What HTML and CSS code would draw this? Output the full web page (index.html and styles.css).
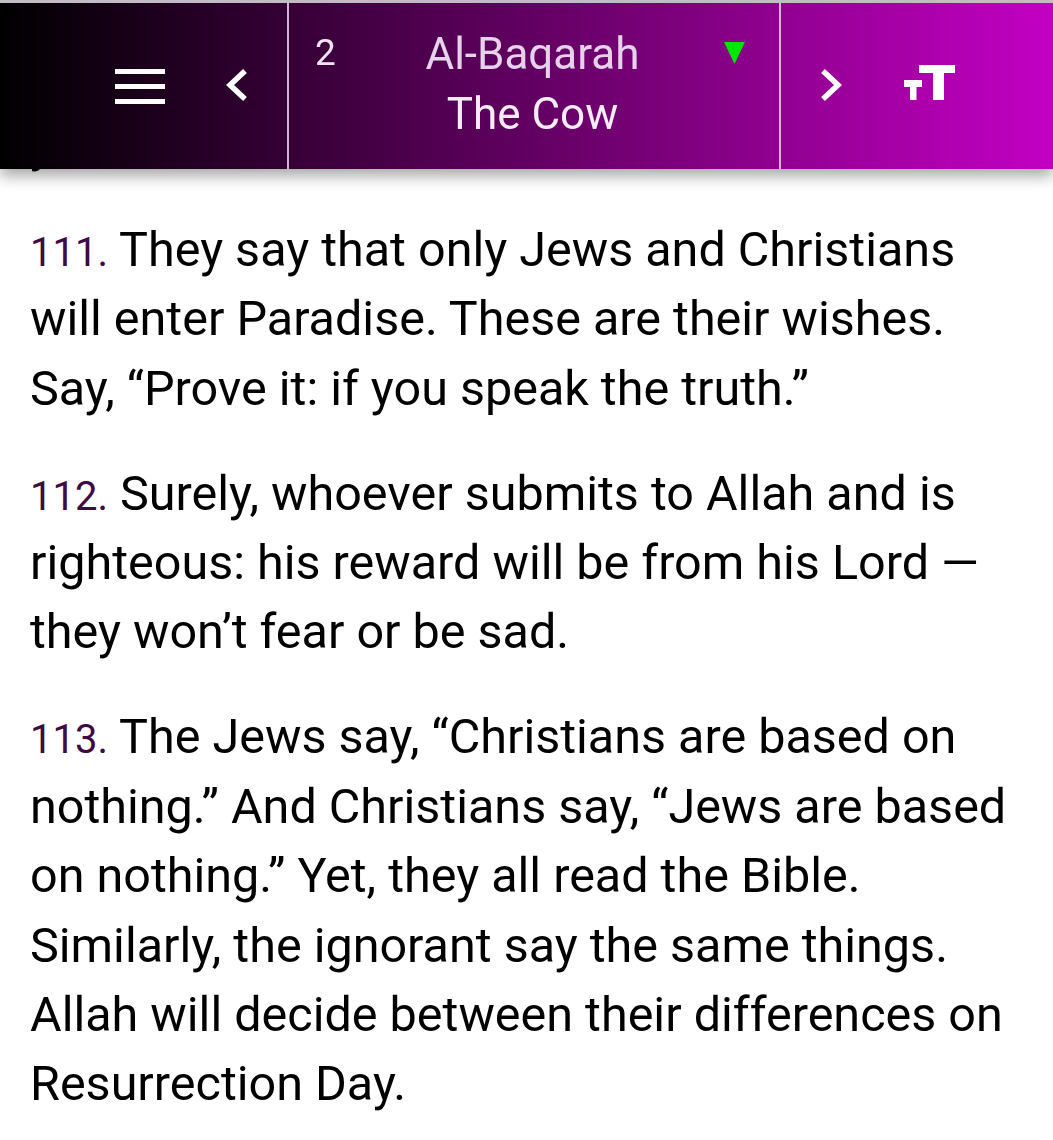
FILE: index.html
```html
<!DOCTYPE html>
<html lang="en">
<head>
    <meta charset="UTF-8">
    <meta name="viewport" content="width=device-width, initial-scale=1.0">
    <title>Al-Baqarah - The Cow</title>
    <link rel="stylesheet" href="styles.css">
</head>
<body>

<div id="top-bar">
    <div class="nav-left">
        <svg class="menu-icon" width="50" height="36" viewBox="0 0 50 36">
            <rect x="0" y="1" width="50" height="5" fill="#fff"/>
            <rect x="0" y="16" width="50" height="5" fill="#fff"/>
            <rect x="0" y="31" width="50" height="5" fill="#fff"/>
        </svg>
        <svg class="chevron" width="22" height="32" viewBox="0 0 22 32">
            <polyline points="19,2 4,16 19,30" fill="none" stroke="#fff" stroke-width="5.5"/>
        </svg>
    </div>

    <div class="sura-picker">
        <span class="sura-number">2</span>
        <div class="sura-titles">
            <div class="sura-name">Al-Baqarah</div>
            <div class="sura-english">The Cow</div>
        </div>
        <svg class="dropdown-arrow" width="21" height="22" viewBox="0 0 21 22">
            <polygon points="0,0 21,0 10.5,22" fill="#00e600"/>
        </svg>
    </div>

    <div class="nav-right">
        <svg class="chevron" width="22" height="32" viewBox="0 0 22 32">
            <polyline points="3,2 18,16 3,30" fill="none" stroke="#fff" stroke-width="5.5"/>
        </svg>
        <svg class="text-size-icon" width="51" height="35" viewBox="0 0 51 35">
            <!-- small T -->
            <rect x="0" y="15" width="18" height="7" fill="#fff"/>
            <rect x="6" y="15" width="6.5" height="20" fill="#fff"/>
            <!-- big T -->
            <rect x="15" y="0" width="36" height="8" fill="#fff"/>
            <rect x="29" y="0" width="11" height="35" fill="#fff"/>
        </svg>
    </div>
</div>

<div id="verses">
    <p class="verse">you do.</p>
    <p class="verse"><span class="verse-num">111.</span> They say that only Jews and Christians will enter Paradise. These are their wishes. Say, “Prove it: if you speak the truth.”</p>
    <p class="verse"><span class="verse-num">112.</span> Surely, whoever submits to Allah and is righteous: his reward will be from his Lord — they won’t fear or be sad.</p>
    <p class="verse"><span class="verse-num">113.</span> The Jews say, “Christians are based on nothing.” And Christians say, “Jews are based on nothing.” Yet, they all read the Bible. Similarly, the ignorant say the same things. Allah will decide between their differences on Resurrection Day.</p>
</div>

</body>
</html>
```

FILE: styles.css
```css
body {
    font-family: Roboto, "Noto Sans", sans-serif;
    background-color: #fff;
    margin: 0;
    padding: 0;
}

#top-bar {
    position: fixed;
    top: 0;
    left: 0;
    right: 0;
    height: 166px;
    display: flex;
    border-top: 3px solid #c4bcc4;
    background: linear-gradient(to right, #000 0%, #c300c3 100%);
    box-shadow: 0 7px 14px rgba(0, 0, 0, 0.35);
    z-index: 10;
}

.nav-left {
    width: 289px;
    display: flex;
    align-items: center;
    padding-left: 115px;
    gap: 61px;
    box-sizing: border-box;
    border-right: 2px solid #d4b4d6;
}

.chevron {
    margin-top: -2px;
}

.sura-picker {
    width: 492px;
    display: flex;
    align-items: flex-start;
    padding: 21px 34px 0 26px;
    box-sizing: border-box;
    border-right: 2px solid #d4b4d6;
}

.sura-number {
    width: 26px;
    margin-top: 9px;
    font-size: 37px;
    line-height: 40px;
    color: #f0e4f2;
}

.sura-titles {
    flex: 1;
    text-align: center;
    font-size: 44px;
    line-height: 60px;
}

.sura-name {
    color: #e6d2ea;
}

.sura-english {
    color: #f6ecf6;
}

.dropdown-arrow {
    margin-top: 18px;
}

.nav-right {
    flex: 1;
    display: flex;
    align-items: center;
    padding-left: 39px;
    gap: 62px;
}

.text-size-icon {
    margin-top: -7px;
}

#verses {
    padding: 110px 30px 40px 30px;
}

.verse {
    margin: 0 0 35.5px 0;
    font-size: 48.5px;
    line-height: 69.4px;
    color: #000;
}

.verse-num {
    font-size: 40px;
    line-height: 1;
    color: #3e0a40;
}
```
